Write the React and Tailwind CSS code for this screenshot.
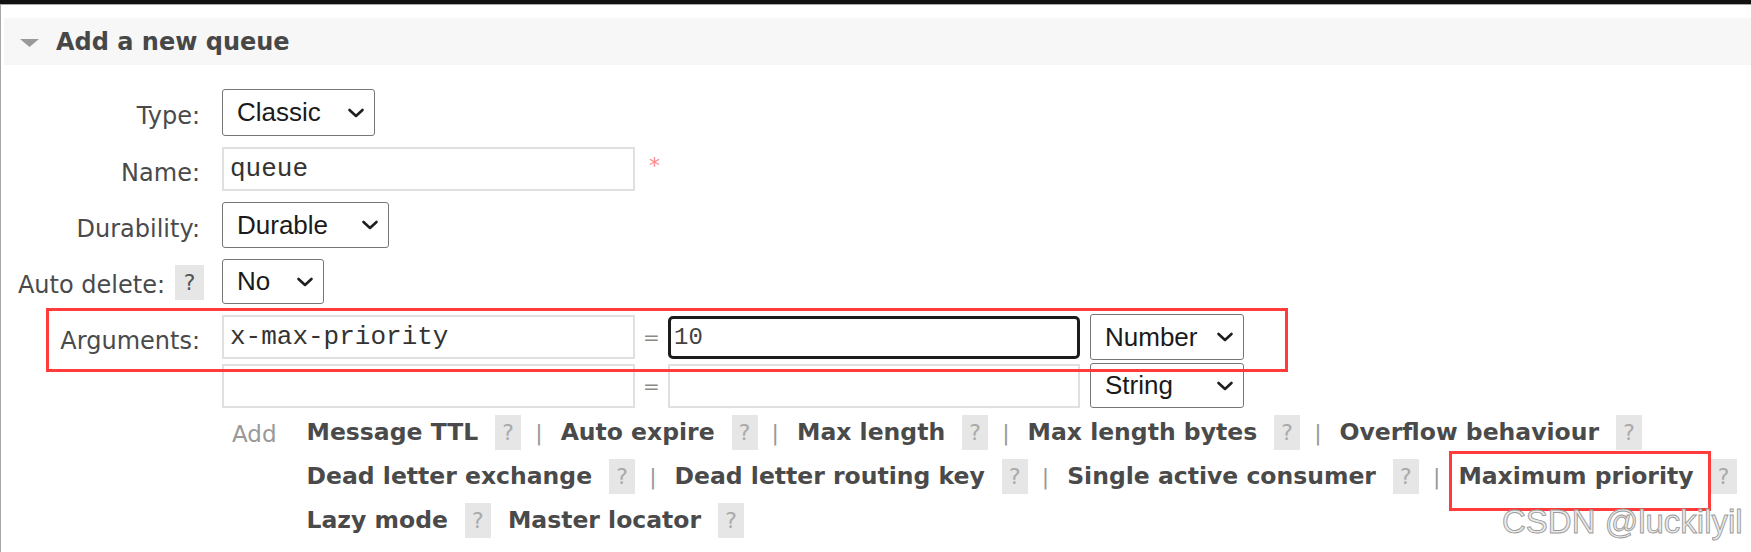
import React from 'react';

const Chevron = () => (
  <svg width="18" height="10" viewBox="0 0 18 10" className="shrink-0">
    <path d="M2.5 2 L9 8 L15.5 2" fill="none" stroke="#1f1f1f" strokeWidth="2.6" strokeLinecap="round" strokeLinejoin="round" />
  </svg>
);

function Select({ value, className }) {
  return (
    <div className={`flex items-center justify-between bg-white border border-[#767676] rounded-[3px] pl-[14px] pr-[9px] font-['Liberation_Sans',Arial,sans-serif] text-[26px] text-[#1a1a1a] ${className}`}>
      <span>{value}</span>
      <Chevron />
    </div>
  );
}

function TextBox({ value, className }) {
  return (
    <input
      readOnly
      value={value}
      className={`h-[44px] bg-white border-2 border-[#e0e0e0] px-[6px] font-['Liberation_Mono',monospace] text-[26px] text-[#333] outline-none ${className}`}
    />
  );
}

const Help = ({ dark }) => (
  <span className={`inline-flex items-center justify-center h-[35px] bg-[#e6e6e6] text-[22px] ${dark ? 'w-[29px] text-[#555]' : 'w-[26px] text-[#aaa]'}`}>?</span>
);

const Sep = () => <span className="ml-[14px] mr-[18px] text-[22px] text-[#999]">|</span>;

function ArgLink({ name, sep, boxed }) {
  return (
    <>
      <span className="relative font-bold text-[23.5px] text-[#4a4a4a] whitespace-nowrap">
        {name}
        {boxed && (
          <span className="absolute -left-[9px] -top-[8px] w-[262px] h-[60px] border-[3px] border-[#ff3b3b] pointer-events-none" />
        )}
      </span>
      <span className="ml-[17px]"><Help /></span>
      {sep ? <Sep /> : <span className="w-[17px]" />}
    </>
  );
}

function Row({ label, help, children, className = '' }) {
  return (
    <div className={`flex items-center ${className}`}>
      <div className="w-[196px] flex items-center justify-end gap-[10px] text-[24px] text-[#4a4a4a] pt-[7px]">
        <span>{label}</span>
        {help && <span className="-mr-[4px] -mt-[7px]"><Help dark /></span>}
      </div>
      <div className="ml-[22px] flex items-center">{children}</div>
    </div>
  );
}

export default function App() {
  return (
    <div className="relative w-[1751px] h-[552px] overflow-hidden bg-white font-['DejaVu_Sans',Verdana,sans-serif]">
      <div className="h-[4px] bg-[#111]" />
      <div className="h-[548px] border-t border-l border-[#a8a8a8] pl-[3px] pt-[13px]">
        <div className="h-[47px] bg-[#f7f7f7] flex items-center">
          <svg width="19" height="8" viewBox="0 0 19 8" className="ml-[16px] mt-[2px]">
            <polygon points="0,0 19,0 9.5,8" fill="#9a9a9a" />
          </svg>
          <h2 className="ml-[17px] font-bold text-[24px] text-[#474747]">Add a new queue</h2>
        </div>

        <div className="mt-[24px]">
          <Row label="Type:">
            <Select value="Classic" className="w-[153px] h-[47px]" />
          </Row>
          <Row label="Name:" className="mt-[11px]">
            <TextBox value="queue" className="w-[413px] h-[43px]" />
            <span className="ml-[14px] -mt-[8px] text-[22px] text-[#ff8a8a]">*</span>
          </Row>
          <Row label="Durability:" className="mt-[11px]">
            <Select value="Durable" className="w-[167px] h-[46px]" />
          </Row>
          <Row label="Auto delete:" help className="mt-[11px]">
            <Select value="No" className="w-[102px] h-[45px]" />
          </Row>

          <div className="relative mt-[10px]">
            <Row label="Arguments:">
              <TextBox value="x-max-priority" className="w-[413px]" />
              <span className="w-[33px] text-center text-[20px] text-[#888]">=</span>
              <input
                readOnly
                value="10"
                className="w-[412px] h-[43px] bg-white border-[3px] border-[#1c1c1c] rounded-[5px] px-[3px] font-['Liberation_Mono',monospace] text-[24px] text-[#444] outline-none"
              />
              <Select value="Number" className="ml-[10px] w-[154px] h-[46px]" />
            </Row>
            <Row label="" className="mt-[3px]">
              <TextBox value="" className="w-[413px] h-[43px]" />
              <span className="w-[33px] text-center text-[20px] text-[#888]">=</span>
              <TextBox value="" className="w-[412px] h-[43px]" />
              <Select value="String" className="ml-[10px] w-[154px] h-[45px]" />
            </Row>
            <div className="absolute left-[42px] -top-[6px] w-[1242px] h-[64px] border-[3px] border-[#ff3b3b] pointer-events-none" />
          </div>

          <div className="flex mt-[7px] ml-[228px]">
            <span className="text-[23px] text-[#999] pt-[2px]">Add</span>
            <div className="ml-[30px] flex flex-col gap-[9px]">
              <div className="flex items-center h-[35px]">
                <ArgLink name="Message TTL" sep />
                <ArgLink name="Auto expire" sep />
                <ArgLink name="Max length" sep />
                <ArgLink name="Max length bytes" sep />
                <ArgLink name="Overflow behaviour" />
              </div>
              <div className="flex items-center h-[35px]">
                <ArgLink name="Dead letter exchange" sep />
                <ArgLink name="Dead letter routing key" sep />
                <ArgLink name="Single active consumer" sep />
                <ArgLink name="Maximum priority" boxed />
              </div>
              <div className="flex items-center h-[35px]">
                <ArgLink name="Lazy mode" />
                <ArgLink name="Master locator" />
              </div>
            </div>
          </div>
        </div>
      </div>

      <div className="absolute left-[1502px] top-[497px] font-['Liberation_Sans',Arial,sans-serif] text-[33px] text-[#ececec] [-webkit-text-stroke:0.9px_#9a9a9a] whitespace-nowrap pointer-events-none">
        CSDN @luckilyil
      </div>
    </div>
  );
}
